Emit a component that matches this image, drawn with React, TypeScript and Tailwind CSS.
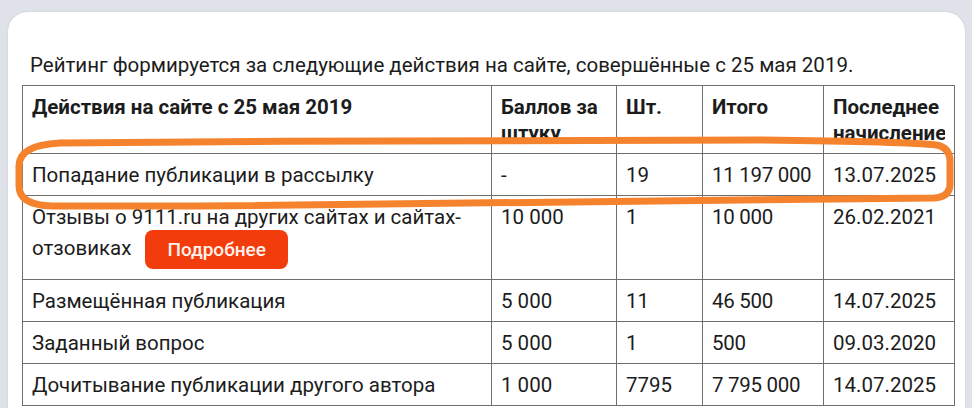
const rows = [
  { name: "Попадание публикации в рассылку", pts: "-", qty: "19", total: "11 197 000", last: "13.07.2025" },
  { name: "Отзывы о 9111.ru на других сайтах и сайтах-отзовиках", pts: "10 000", qty: "1", total: "10 000", last: "26.02.2021", more: true },
  { name: "Размещённая публикация", pts: "5 000", qty: "11", total: "46 500", last: "14.07.2025" },
  { name: "Заданный вопрос", pts: "5 000", qty: "1", total: "500", last: "09.03.2020" },
  { name: "Дочитывание публикации другого автора", pts: "1 000", qty: "7795", total: "7 795 000", last: "14.07.2025" },
];

const cell = "border border-[#6e6e6e] align-top px-[9px] pt-[8px]";

export default function App() {
  return (
    <div className="relative w-[972px] h-[408px] overflow-hidden bg-[#dfe3e9] pt-[12px] px-[8px] font-['Roboto',sans-serif] text-[20.5px] leading-[26px] text-[#1c1c1c]">
      <div className="bg-white rounded-t-[20px] h-[420px] w-[957px] pl-[14px] pt-[40px] shadow-[0_0_3px_rgba(0,0,0,0.08)]">
        <p className="mb-[7px] pl-[8px]">
          Рейтинг формируется за следующие действия на сайте, совершённые с 25 мая 2019.
        </p>
        <table className="table-fixed border-collapse w-[932px]">
          <colgroup>
            <col className="w-[469px]" />
            <col className="w-[125px]" />
            <col className="w-[86px]" />
            <col className="w-[121px]" />
            <col className="w-[131px]" />
          </colgroup>
          <thead>
            <tr className="h-[68px]">
              <th className={`${cell} text-left font-bold pb-0`}>Действия на сайте с 25 мая 2019</th>
              <th className={`${cell} text-left font-bold pb-0`}>
                <div className="h-[52px] overflow-hidden">Баллов за штуку</div>
              </th>
              <th className={`${cell} text-left font-bold pb-0`}>Шт.</th>
              <th className={`${cell} text-left font-bold pb-0`}>Итого</th>
              <th className={`${cell} text-left font-bold pb-0`}>
                <div className="h-[52px] overflow-hidden">Последнее начисление</div>
              </th>
            </tr>
          </thead>
          <tbody>
            {rows.map((r) => {
              const td = `${cell} ${r.more ? "pb-[10px]" : "pb-[7px]"}`;
              return (
                <tr key={r.name}>
                  <td className={td}>
                    {r.more ? (
                      <>
                        Отзывы о 9111.ru на других сайтах и сайтах-
                        <br />
                        отзовиках
                        <span className="ml-[14px] inline-flex h-[39px] items-center rounded-[8px] bg-[#f33c0b] px-[22px] align-middle text-[19px] font-medium text-[#fff1ec]">
                          Подробнее
                        </span>
                      </>
                    ) : (
                      r.name
                    )}
                  </td>
                  <td className={td}>{r.pts}</td>
                  <td className={td}>{r.qty}</td>
                  <td className={`${td} whitespace-nowrap tracking-[-0.3px]`}>{r.total}</td>
                  <td className={td}>{r.last}</td>
                </tr>
              );
            })}
          </tbody>
        </table>
      </div>

      <svg className="pointer-events-none absolute inset-0" width="972" height="408" viewBox="0 0 972 408">
        <path
          d="M 60 143 C 300 141, 600 139, 760 140 C 850 141, 920 143, 936 145 Q 950 147, 950 162 L 950 184 Q 950 197, 934 198 C 800 201, 500 204, 200 206 L 52 206 Q 19 205, 19 186 L 19 166 Q 19 145, 60 143 Z"
          fill="none"
          stroke="#f5832e"
          strokeWidth="7"
          strokeLinejoin="round"
        />
      </svg>
    </div>
  );
}
